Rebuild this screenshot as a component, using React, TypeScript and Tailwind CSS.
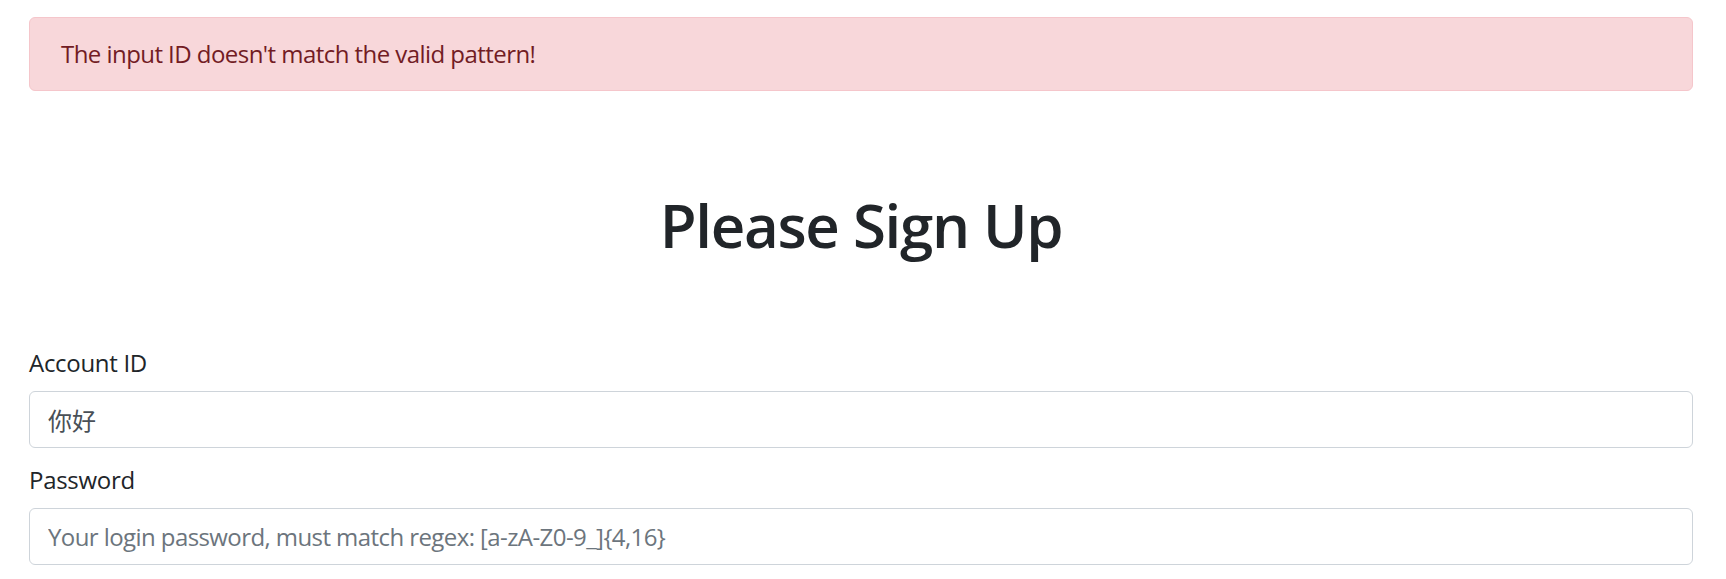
import React from "react";

export default function App() {
  const font = {
    fontFamily: '"Open Sans", "Noto Sans CJK SC", sans-serif',
  };
  return (
    <div
      className="min-h-[579px] bg-white pl-[29px] pr-[33px] pt-[17px] font-['Open_Sans','Noto_Sans_CJK_SC',sans-serif]"
    >
      <div className="rounded-[6px] border border-[#f5c6cb] bg-[#f8d7da] px-[31px] py-[18px] text-[24px] leading-[36px] tracking-[-0.55px] text-[#721c24]">
        The input ID doesn't match the valid pattern!
      </div>

      <h1 className="mt-[98px] text-center text-[60px] font-semibold leading-[72px] tracking-[-1.3px] text-[#212529]">
        Please Sign Up
      </h1>

      <form className="mt-[84px]" onSubmit={(e) => e.preventDefault()}>
        <label className="mb-[10px] block text-[24px] leading-[36px] tracking-[-0.3px] text-[#212529]">
          Account ID
        </label>
        <input
          type="text"
          defaultValue="你好"
          style={font}
          className="block h-[57px] w-full rounded-[6px] border border-[#ced4da] bg-white px-[18px] text-[24px] leading-[36px] text-[#495057] outline-none"
        />
        <label className="mb-[10px] mt-[14px] block text-[24px] leading-[36px] tracking-[-0.3px] text-[#212529]">
          Password
        </label>
        <input
          type="password"
          placeholder="Your login password, must match regex: [a-zA-Z0-9_]{4,16}"
          style={font}
          className="block h-[57px] w-full rounded-[6px] border border-[#ced4da] bg-white px-[18px] text-[24px] leading-[36px] tracking-[-0.58px] text-[#495057] outline-none placeholder:text-[#6c757d]"
        />
      </form>
    </div>
  );
}
